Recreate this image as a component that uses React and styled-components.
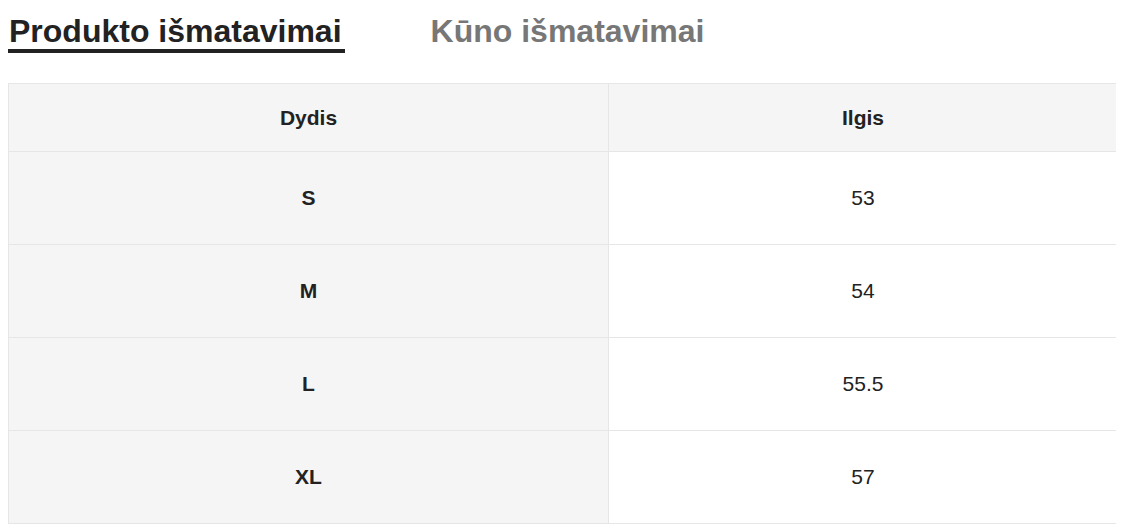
import React from 'react'
import styled, { createGlobalStyle } from 'styled-components'

const Global = createGlobalStyle`
	body {
		margin: 8px 8px 0;
		background: #fff;
		font-family: 'Liberation Sans', Arial, sans-serif;
		color: #222;
	}
`

const Tabs = styled.div`
	display: flex;
	gap: 85px;
	margin-top: 5px;
	margin-bottom: 30px;
`

const Tab = styled.div`
	font-size: 32px;
	font-weight: 700;
	line-height: 36px;
	padding: 0 3px 0 1px;
	color: ${p => (p.active ? '#222' : '#777')};
	border-bottom: 4px solid ${p => (p.active ? '#222' : 'transparent')};
`

const Table = styled.table`
	width: 1110px;
	border-collapse: separate;
	border-spacing: 0;
	table-layout: fixed;
	font-size: 21px;
	border-top: 1px solid #e6e6e6;
	border-left: 1px solid #e6e6e6;
`

const Head = styled.th`
	box-sizing: border-box;
	height: 68px;
	padding: 0;
	background: #f5f5f5;
	border-right: 1px solid #e6e6e6;
	border-bottom: 1px solid #e6e6e6;
	font-weight: 700;
	text-align: center;
	width: ${p => p.$width || 'auto'};
`

const Cell = styled.td`
	box-sizing: border-box;
	height: 93px;
	padding: 0;
	border-right: 1px solid #e6e6e6;
	border-bottom: 1px solid #e6e6e6;
	text-align: center;
	background: ${p => (p.$label ? '#f5f5f5' : '#fff')};
	font-weight: ${p => (p.$label ? 700 : 400)};
`

const rows = [
	['S', '53'],
	['M', '54'],
	['L', '55.5'],
	['XL', '57'],
]

export default function App() {
	return (
		<>
			<Global />
			<Tabs>
				<Tab active>Produkto išmatavimai</Tab>
				<Tab>Kūno išmatavimai</Tab>
			</Tabs>
			<Table>
				<thead>
					<tr>
						<Head $width="600px">Dydis</Head>
						<Head>Ilgis</Head>
					</tr>
				</thead>
				<tbody>
					{rows.map(([size, len]) => (
						<tr key={size}>
							<Cell $label>{size}</Cell>
							<Cell>{len}</Cell>
						</tr>
					))}
				</tbody>
			</Table>
		</>
	)
}
